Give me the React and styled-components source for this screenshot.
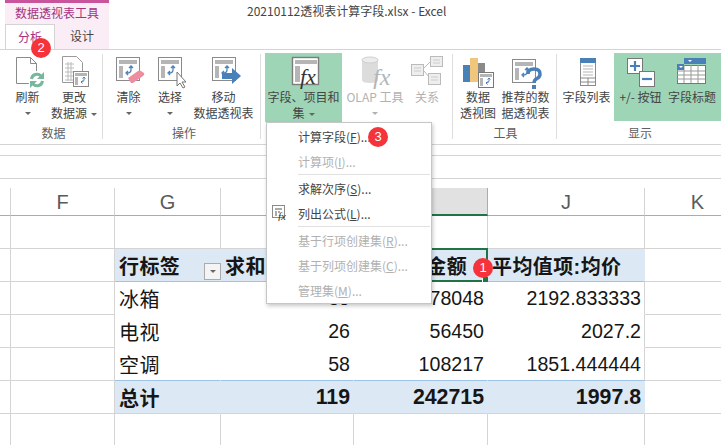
import React from "react";
import styled, { createGlobalStyle } from "styled-components";

const CJK = `"Noto Sans CJK SC", "Noto Sans", sans-serif`;
const GRID = "#d4d4d4";
const TOOL = "#a6317f";
const CELL_BLUE = "#dce9f5";
const GREEN = "#217346";

const Global = createGlobalStyle`
  html, body { margin: 0; padding: 0; background: #fff; }
  body { width: 721px; height: 445px; overflow: hidden; font-family: ${CJK}; }
  #root { width: 721px; height: 445px; overflow: hidden; }
`;

const Window = styled.div`
  position: relative;
  width: 721px;
  height: 445px;
  overflow: hidden;
`;

/* title bar + tabs */
const TopBar = styled.div`
  display: flex;
  height: 49px;
  border-bottom: 1px solid ${GRID};
`;
const ToolBlock = styled.div`
  margin-left: 5px;
  width: 104px;
  background: #fbedf5;
  border-top: 3px solid #c8559b;
  display: flex;
  flex-direction: column;
`;
const ToolName = styled.div`
  height: 22px;
  line-height: 19px;
  text-align: center;
  font-size: 12px;
  color: ${TOOL};
`;
const Tabs = styled.div`
  display: flex;
  height: 25px;
`;
const Tab = styled.div`
  position: relative;
  width: ${(p) => (p.$active ? "50px" : "54px")};
  height: ${(p) => (p.$active ? "25px" : "24px")};
  box-sizing: border-box;
  text-align: center;
  font-size: 12px;
  line-height: 23px;
  color: ${(p) => (p.$active ? TOOL : "#444")};
  background: ${(p) => (p.$active ? "#fff" : "transparent")};
  ${(p) => p.$active && `border: 1px solid ${GRID}; border-bottom: 0;`}
`;
const Title = styled.div`
  margin-left: 138px;
  font-size: 12px;
  line-height: 22px;
  color: #444;
  white-space: nowrap;
`;

/* ribbon */
const Ribbon = styled.div`
  display: flex;
  height: 95px;
  box-sizing: border-box;
  border-bottom: 1px solid ${GRID};
`;
const Group = styled.div`
  width: ${(p) => p.$w}px;
  box-sizing: border-box;
  display: flex;
  flex-direction: column;
  padding: 3px 0 0 ${(p) => p.$pad || 0}px;
  position: relative;
  &::after {
    content: "";
    position: absolute;
    right: -1px;
    top: 4px;
    bottom: 5px;
    width: 1px;
    background: ${(p) => (p.$last ? "transparent" : "#dedede")};
  }
`;
const GroupButtons = styled.div`
  display: flex;
  height: 69px;
`;
const GroupLabel = styled.div`
  text-align: center;
  font-size: 12px;
  line-height: 23px;
  color: #5e5e5e;
`;
const RibbonBtn = styled.div`
  width: ${(p) => p.$w}px;
  flex: none;
  box-sizing: border-box;
  padding-right: ${(p) => p.$endPad || 0}px;
  display: flex;
  flex-direction: column;
  align-items: center;
  background: ${(p) => (p.$on ? "#9fd5b7" : "transparent")};
  color: ${(p) => (p.$off ? "#b1b1b1" : "#444")};
  font-size: 12px;
  line-height: 16px;
  white-space: nowrap;
`;
const IconSlot = styled.div`
  height: 36px;
  width: 100%;
  display: flex;
  justify-content: center;
  align-items: flex-start;
`;
const Caret = styled.span`
  display: inline-block;
  width: 0;
  height: 0;
  margin-left: ${(p) => (p.$inline ? "4px" : "0")};
  vertical-align: middle;
  border-left: 3px solid transparent;
  border-right: 3px solid transparent;
  border-top: 3px solid ${(p) => (p.$off ? "#b1b1b1" : "#666")};
`;
const CaretRow = styled.div`
  height: 16px;
  line-height: 14px;
`;

/* formula strip */
const FormulaStrip = styled.div`
  height: 10px;
  border-bottom: 1px solid ${GRID};
`;
const NameRow = styled.div`
  height: 22px;
  border-bottom: 1px solid ${GRID};
`;
const HeaderGap = styled.div`
  height: 9px;
`;

/* sheet */
const Sheet = styled.div`
  display: grid;
  grid-template-columns: 11px 104px 106px 133px 134px 157px 106px;
  grid-template-rows: 28px repeat(7, 33px);
`;
const ColHead = styled.div`
  box-sizing: border-box;
  border-bottom: 1px solid #ababab;
  border-right: 1px solid ${(p) => (p.$selected ? "#ababab" : GRID)};
  background: ${(p) => (p.$selected ? "#e1e1e1" : "#fff")};
  ${(p) => p.$selected && `border-bottom: 2px solid ${GREEN};`}
  text-align: center;
  font-family: "Liberation Sans", sans-serif;
  font-size: 20px;
  line-height: 29px;
  color: #5a5a5a;
`;
const cellSize = (p) => {
  if (p.$cjk) return "20px";
  return p.$bold ? "21.3px" : "19.6px";
};
const Cell = styled.div`
  position: relative;
  box-sizing: border-box;
  display: flex;
  align-items: center;
  justify-content: ${(p) => (p.$right ? "flex-end" : "flex-start")};
  padding: 0 3px 0 4px;
  border-right: 1px solid ${(p) => (p.$band ? CELL_BLUE : p.$plain ? "#fff" : GRID)};
  border-bottom: 1px solid ${(p) => (p.$line ? "#9dc3e6" : p.$plain || p.$open ? "#fff" : GRID)};
  background: ${(p) => (p.$band ? CELL_BLUE : "#fff")};
  font-family: "Liberation Sans", ${CJK};
  font-size: ${cellSize};
  font-weight: ${(p) => (p.$bold ? 700 : 400)};
  letter-spacing: ${(p) => (p.$cjk ? "0.4px" : "0")};
  color: #161616;
  white-space: nowrap;
`;
const FilterBtn = styled.div`
  position: absolute;
  right: -1px;
  top: 14px;
  width: 17px;
  height: 17px;
  box-sizing: border-box;
  background: #f4f4f4;
  border: 1px solid #ababab;
  display: flex;
  align-items: center;
  justify-content: center;
`;
const Selection = styled.div`
  position: absolute;
  left: -1px;
  top: -1px;
  right: -1px;
  bottom: -1px;
  border: 2px solid ${GREEN};
  pointer-events: none;
`;
const Handle = styled.div`
  position: absolute;
  right: -3px;
  bottom: -3px;
  width: 5px;
  height: 5px;
  background: ${GREEN};
  border: 1px solid #fff;
`;

/* dropdown */
const Menu = styled.div`
  position: absolute;
  left: 266px;
  top: 122px;
  width: 166px;
  height: 182px;
  box-sizing: border-box;
  padding-top: 1px;
  background: #fff;
  border: 1px solid #c6c6c6;
  box-shadow: 1px 2px 4px rgba(0, 0, 0, 0.22);
`;
const MenuItem = styled.div`
  position: relative;
  height: 25px;
  padding-left: 31px;
  font-size: 12px;
  line-height: 26px;
  color: ${(p) => (p.$off ? "#b1b1b1" : "#444")};
  white-space: nowrap;
  svg {
    position: absolute;
    left: 5px;
    top: 4px;
  }
`;
const MenuRule = styled.div`
  height: 1px;
  margin: 0 1px 1px 31px;
  background: #e1e1e1;
`;
const Badge = styled.div`
  position: absolute;
  left: ${(p) => p.$x}px;
  top: ${(p) => p.$y}px;
  width: 20px;
  height: 20px;
  border-radius: 50%;
  background: #f5333a;
  color: #fff;
  font-family: "Liberation Sans", sans-serif;
  font-size: 13px;
  font-weight: 400;
  letter-spacing: 0;
  line-height: 20px;
  text-align: center;
  z-index: 5;
`;

/* icons */
const Pivot = ({ x = 0, y = 0, line = "#8a8a8a" }) => (
  <g transform={`translate(${x} ${y})`}>
    <rect x="0.5" y="0.5" width="23" height="23" fill="#fff" stroke={line} />
    <rect x="3" y="3" width="18" height="4" fill="#b5b5b5" />
    <rect x="3" y="9" width="4" height="12" fill="#b5b5b5" />
    <path
      d="M15 9v4q0 3-4 3M13 11l2-2 2 2M12 14l-2 2 2 2"
      fill="none"
      stroke="#4a7fb8"
      strokeWidth="1.3"
    />
  </g>
);
const MiniPivot = ({ x, y, line = "#8a8a8a" }) => (
  <g transform={`translate(${x} ${y})`}>
    <rect x=".5" y=".5" width="15" height="15" fill="#fff" stroke={line} />
    <rect x="2" y="2" width="12" height="3" fill="#b5b5b5" />
    <rect x="2" y="6" width="3" height="8" fill="#b5b5b5" />
    <path d="M11 6v3q0 2-3 2M9.500 7.500l1.500-1.500 1.500 1.500M9.500 9.500l-1.500 1.500 1.500 1.500" fill="none" stroke="#4a7fb8" />
  </g>
);
const Svg = ({ w = 36, h = 36, children }) => (
  <svg width={w} height={h} viewBox={`0 0 ${w} ${h}`}>{children}</svg>
);
const Fx = ({ x, y, color = "#333", size = 18 }) => (
  <text x={x} y={y} fontFamily="Liberation Serif, serif" fontStyle="italic" fontSize={size} fill={color}>fx</text>
);

const RefreshIcon = () => (
  <Svg>
    <path d="M6.500 4.500h14l6 6v20h-20z M20.500 4.500v6h6" fill="#fff" stroke="#8a8a8a" />
    <circle cx="27" cy="27" r="9" fill="#fff" />
    <path d="M21.500 26a5.500 5.500 0 0 1 9.500-3" fill="none" stroke="#79b79d" strokeWidth="3" />
    <path d="M34 19v7h-7z" fill="#79b79d" />
    <path d="M32.500 28a5.500 5.500 0 0 1-9.500 3" fill="none" stroke="#79b79d" strokeWidth="3" />
    <path d="M20 35v-7h7z" fill="#79b79d" />
  </Svg>
);
const SourceIcon = () => (
  <Svg>
    <path d="M6.500 3.500h14l6 6v20h-20z" fill="#fff" stroke="#9a9a9a" />
    <path d="M9 11h9M9 15h9M9 19h9M9 23h9M9 27h9M12 9v19M15 9v19" stroke="#bbb" />
    <MiniPivot x={17} y={18} />
  </Svg>
);
const ClearIcon = () => (
  <Svg>
    <Pivot x={5} y={4} />
    <path d="M17 25l10-7q2-1 3 0l3 2q1 2-1 3l-10 7h-2z" fill="#ee8ca0" />
  </Svg>
);
const SelectIcon = () => (
  <Svg>
    <Pivot x={6} y={4} />
    <path d="M25 19v14l3-3 3 5 2-1-3-5h4z" fill="#fff" stroke="#777" />
  </Svg>
);
const MoveIcon = () => (
  <Svg>
    <Pivot x={6} y={4} />
    <path d="M16 20h10v-5l9 8-9 8v-5h-10z" fill="#4a80b8" />
  </Svg>
);
const FieldsIcon = () => (
  <Svg>
    <g transform="translate(6 4)">
      <rect x=".5" y=".5" width="26" height="27" fill="#fff" stroke="#7d7d7d" strokeWidth="1.4" />
      <rect x="3" y="3" width="22" height="4" fill="#b5b5b5" />
      <rect x="3" y="9" width="5" height="16" fill="#b5b5b5" />
    </g>
    <Fx x={14} y={31} size={22} />
  </Svg>
);
const OlapIcon = () => (
  <Svg>
    <path d="M5 7v20q0 3 8 3t8-3V7z" fill="#dcdcdc" />
    <ellipse cx="13" cy="7" rx="8" ry="3" fill="#ececec" stroke="#cfcfcf" />
    <Fx x={16} y={32} color="#b5b5b5" size={24} />
  </Svg>
);
const RelationIcon = () => (
  <Svg>
    <g fill="#eee" stroke="#bbb">
      <rect x="2.500" y="11.500" width="12" height="11" />
      <rect x="21.500" y="3.500" width="12" height="10" />
      <rect x="19.500" y="20.500" width="12" height="11" />
    </g>
    <path d="M15 15l6-6M15 18l5 6" stroke="#bbb" fill="none" />
    <path d="M5 15h7M5 18h7M24 7h7M24 10h7M22 24h7M22 27h7" stroke="#ccc" />
  </Svg>
);
const ChartIcon = () => (
  <Svg>
    <rect x="3" y="12" width="7" height="17" fill="#4a80b8" />
    <rect x="10" y="5" width="8" height="24" fill="#efc67c" />
    <rect x="18" y="10" width="7" height="19" fill="#8a8a8a" />
    <MiniPivot x={18} y={19} line="#777" />
  </Svg>
);
const RecommendIcon = () => (
  <Svg>
    <Pivot x={4} y={6} />
    <path d="M20 21q0-5 6-5t6 5q0 3-3 4.500t-3 4.500" fill="none" stroke="#4a80b8" strokeWidth="3.500" />
    <rect x="24" y="32" width="4" height="4" fill="#4a80b8" />
  </Svg>
);
const FieldListIcon = () => (
  <Svg>
    <rect x="11.500" y="5.500" width="15" height="27" fill="#fff" stroke="#8a8a8a" />
    <rect x="11" y="5" width="16" height="5" fill="#4a80b8" />
    <path d="M14 13h10M14 16h10M14 19h10M14 22h10" stroke="#b5b5b5" />
    <path d="M12 25h14M12 29h14M19 25v7" stroke="#8a8a8a" />
  </Svg>
);
const PlusMinusIcon = () => (
  <Svg>
    <rect x="4.500" y="5.500" width="15" height="15" fill="#fff" stroke="#777" />
    <path d="M7 13h10M12 8v10" stroke="#4a80b8" strokeWidth="2.200" />
    <rect x="16.500" y="18.500" width="15" height="15" fill="#fff" stroke="#777" />
    <path d="M19 26h10" stroke="#4a80b8" strokeWidth="2.200" />
  </Svg>
);
const TitlesIcon = () => (
  <Svg>
    <rect x="3.500" y="12.500" width="28" height="18" fill="#fff" stroke="#777" />
    <path d="M3 18h28M3 22h28M3 26h28M10 12v18M17 12v18M24 12v18" stroke="#999" />
    <rect x="10" y="5" width="22" height="6" fill="#4a80b8" />
    <rect x="3" y="11" width="7" height="6" fill="#4a80b8" />
    <path d="M14 7h4l-2 2zM5 13h4l-2 2z" fill="#fff" />
  </Svg>
);
const FormulaListIcon = () => (
  <svg width="16" height="16" viewBox="0 0 16 16">
    <rect x=".5" y=".5" width="12" height="12" fill="#fff" stroke="#8a8a8a" />
    <path d="M3 3h7v2H3zM3 6h2v5H3zM6 6h2v2H6z" fill="#aaa" />
    <Fx x={6} y={15} size={11} />
  </svg>
);

const ribbonGroups = [
  {
    name: "数据", w: 102, pad: 5,
    items: [
      { w: 45, icon: <RefreshIcon />, lines: ["刷新"], caret: "below" },
      { w: 48, icon: <SourceIcon />, lines: ["更改", "数据源"], caret: "inline" },
    ],
  },
  {
    name: "操作", w: 158, pad: 6,
    items: [
      { w: 41, icon: <ClearIcon />, lines: ["清除"], caret: "below" },
      { w: 42, icon: <SelectIcon />, lines: ["选择"], caret: "below" },
      { w: 65, icon: <MoveIcon />, lines: ["移动", "数据透视表"] },
    ],
  },
  {
    name: "", w: 192, pad: 5,
    items: [
      { w: 77, on: true, icon: <FieldsIcon />, lines: ["字段、项目和", "集"], caret: "inline" },
      { w: 66, off: true, icon: <OlapIcon />, lines: ["OLAP 工具"], caret: "below" },
      { w: 38, off: true, icon: <RelationIcon />, lines: ["关系"] },
    ],
  },
  {
    name: "工具", w: 104, pad: 3,
    items: [
      { w: 46, icon: <ChartIcon />, lines: ["数据", "透视图"] },
      { w: 49, icon: <RecommendIcon />, lines: ["推荐的数", "据透视表"] },
    ],
  },
  {
    name: "显示", w: 165, pad: 3, last: true,
    items: [
      { w: 55, icon: <FieldListIcon />, lines: ["字段列表"] },
      { w: 53, on: true, icon: <PlusMinusIcon />, lines: ["+/- 按钮"] },
      { w: 54, on: true, endPad: 4, icon: <TitlesIcon />, lines: ["字段标题"] },
    ],
  },
];

const columns = ["", "F", "G", "", "", "J", "K"];

const rows = [
  { label: "冰箱", a: "35", b: "78048", c: "2192.833333" },
  { label: "电视", a: "26", b: "56450", c: "2027.2" },
  { label: "空调", a: "58", b: "108217", c: "1851.444444", last: true },
];

const menuItems = [
  { text: "计算字段", key: "F" },
  { text: "计算项", key: "I", off: true, rule: true },
  { text: "求解次序", key: "S" },
  { text: "列出公式", key: "L", icon: true, rule: true },
  { text: "基于行项创建集", key: "R", off: true },
  { text: "基于列项创建集", key: "C", off: true },
  { text: "管理集", key: "M", off: true },
];

const EmptyCells = ({ n }) =>
  Array.from({ length: n }, (_, i) => <Cell key={i} />);

function RibbonButton({ item }) {
  return (
    <RibbonBtn $w={item.w} $on={item.on} $off={item.off} $endPad={item.endPad}>
      <IconSlot>{item.icon}</IconSlot>
      {item.lines.map((line, i) => (
        <div key={line}>
          {line}
          {item.caret === "inline" && i === item.lines.length - 1 && <Caret $inline />}
        </div>
      ))}
      {item.caret === "below" && (
        <CaretRow>
          <Caret $off={item.off} />
        </CaretRow>
      )}
    </RibbonBtn>
  );
}

export default function App() {
  return (
    <Window>
      <Global />
      <TopBar>
        <ToolBlock>
          <ToolName>数据透视表工具</ToolName>
          <Tabs>
            <Tab $active>
              分析
              <Badge $x={25} $y={13}>2</Badge>
            </Tab>
            <Tab>设计</Tab>
          </Tabs>
        </ToolBlock>
        <Title>20210112透视表计算字段.xlsx - Excel</Title>
      </TopBar>

      <Ribbon>
        {ribbonGroups.map((g) => (
          <Group key={g.name || "fields"} $w={g.w} $pad={g.pad} $last={g.last}>
            <GroupButtons>
              {g.items.map((item) => (
                <RibbonButton key={item.lines[0]} item={item} />
              ))}
            </GroupButtons>
            <GroupLabel>{g.name}</GroupLabel>
          </Group>
        ))}
      </Ribbon>

      <FormulaStrip />
      <NameRow />
      <HeaderGap />

      <Sheet>
        {columns.map((c, i) => (
          <ColHead key={i} $selected={i === 4}>{c}</ColHead>
        ))}

        <EmptyCells n={7} />

        <EmptyCells n={2} />
        <Cell $band $line $cjk $bold>
          行标签
          <FilterBtn>
            <Caret />
          </FilterBtn>
        </Cell>
        <Cell $band $line $cjk $bold>求和项:数量</Cell>
        <Cell $band $line $cjk $bold>
          求和项:金额
          <Selection>
            <Handle />
          </Selection>
          <Badge $x={119} $y={9}>1</Badge>
        </Cell>
        <Cell $band $line $cjk $bold>平均值项:均价</Cell>
        <Cell />

        {rows.map((r) => (
          <React.Fragment key={r.label}>
            <EmptyCells n={2} />
            <Cell $plain $line={r.last} $cjk>{r.label}</Cell>
            <Cell $plain $line={r.last} $right>{r.a}</Cell>
            <Cell $plain $line={r.last} $right>{r.b}</Cell>
            <Cell $open $line={r.last} $right>{r.c}</Cell>
            <Cell />
          </React.Fragment>
        ))}

        <EmptyCells n={2} />
        <Cell $band $cjk $bold>总计</Cell>
        <Cell $band $right $bold>119</Cell>
        <Cell $band $right $bold>242715</Cell>
        <Cell $band $right $bold>1997.8</Cell>
        <Cell />

        <EmptyCells n={7} />
      </Sheet>

      <Menu>
        {menuItems.map((m) => (
          <React.Fragment key={m.text}>
            <MenuItem $off={m.off}>
              {m.icon && <FormulaListIcon />}
              {m.text}(<u>{m.key}</u>)...
              {m.key === "F" && <Badge $x={101} $y={3}>3</Badge>}
            </MenuItem>
            {m.rule && <MenuRule />}
          </React.Fragment>
        ))}
      </Menu>
    </Window>
  );
}
